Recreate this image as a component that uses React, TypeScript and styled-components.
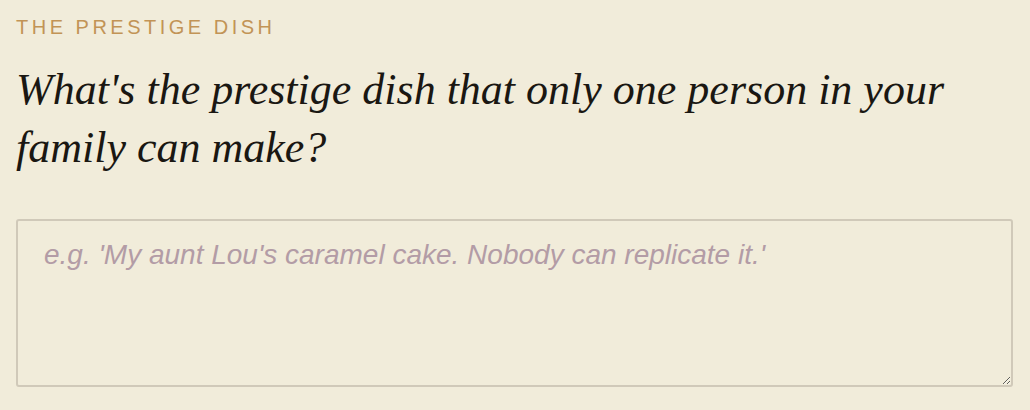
import React from "react";
import styled, { createGlobalStyle } from "styled-components";

const Global = createGlobalStyle`
  html, body { margin: 0; padding: 0; background: #f1ecda; }
  * { box-sizing: border-box; }
`;

const Page = styled.div`
  display: flex;
  flex-direction: column;
  padding: 16px 17px 0 16px;
  width: 1030px;
  height: 410px;
  background: #f1ecda;
`;

const Label = styled.div`
  font-family: "Liberation Sans", Arial, sans-serif;
  font-size: 20px;
  letter-spacing: 3.5px;
  color: #c29456;
  line-height: 22px;
  text-transform: uppercase;
`;

const Question = styled.h2`
  margin: 23px 0 0 0;
  font-family: "Liberation Serif", "Times New Roman", serif;
  font-style: italic;
  font-weight: normal;
  font-size: 44px;
  line-height: 58px;
  color: #1a1712;
`;

const Answer = styled.textarea`
  margin-top: 42px;
  width: 100%;
  height: 168px;
  padding: 17px 26px;
  border: 2px solid #d0c9b9;
  border-radius: 3px;
  background: #f1ecda;
  font-family: "Liberation Sans", Arial, sans-serif;
  font-style: italic;
  font-size: 28px;
  line-height: 34px;
  color: #1a1712;
  outline: none;
  &::placeholder { color: #b39ca6; }
`;

export default function App() {
  return (
    <>
      <Global />
      <Page>
        <Label>The Prestige Dish</Label>
        <Question>What's the prestige dish that only one person in your family can make?</Question>
        <Answer placeholder="e.g. 'My aunt Lou's caramel cake. Nobody can replicate it.'" />
      </Page>
    </>
  );
}
